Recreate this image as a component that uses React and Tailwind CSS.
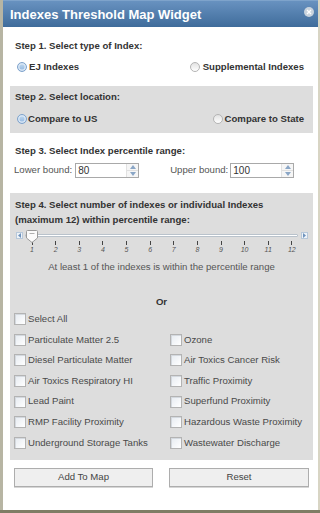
import React from 'react';

const font = "font-['Liberation_Sans',Arial,sans-serif]";

const Radio = ({ checked }) => (
  <span
    className={
      checked
        ? 'inline-block w-[10px] h-[10px] rounded-full border border-[#7fa3cc] bg-gradient-to-b from-[#c4dbf1] to-[#8fb5de] shadow-[inset_0_0_0_1.5px_#d9e7f5]'
        : 'inline-block w-[10px] h-[10px] rounded-full border border-[#b4b4b4] bg-gradient-to-b from-[#e2e2e2] to-white'
    }
  />
);

const Checkbox = () => (
  <span className="inline-block w-[12px] h-[12px] border border-[#b3b3b3] bg-gradient-to-br from-[#e6ebf1] to-white shadow-[inset_1px_1px_0_#d4d9df] shrink-0" />
);

const NumberInput = ({ value }) => (
  <div className="flex w-[64px] h-[15px] border border-[#a9a9a9] bg-white">
    <span className="flex-1 pl-[2px] text-[10px] leading-[13px] text-[#333]">{value}</span>
    <div className="w-[12px] flex flex-col border-l border-[#e2e2e2] bg-[#f6f6f6]">
      <div className="flex-1 flex items-center justify-center border-b border-[#e0e0e0]">
        <svg width="6" height="4" viewBox="0 0 6 4"><path d="M0 4 L3 0 L6 4 Z" fill="#8aa6c6" /></svg>
      </div>
      <div className="flex-1 flex items-center justify-center">
        <svg width="6" height="4" viewBox="0 0 6 4"><path d="M0 0 L3 4 L6 0 Z" fill="#8aa6c6" /></svg>
      </div>
    </div>
  </div>
);

const indexes = [
  ['Particulate Matter 2.5', 'Ozone'],
  ['Diesel Particulate Matter', 'Air Toxics Cancer Risk'],
  ['Air Toxics Respiratory HI', 'Traffic Proximity'],
  ['Lead Paint', 'Superfund Proximity'],
  ['RMP Facility Proximity', 'Hazardous Waste Proximity'],
  ['Underground Storage Tanks', 'Wastewater Discharge'],
];

const CheckItem = ({ label }) => (
  <div className="flex items-center gap-[2px] h-[20.6px]">
    <Checkbox />
    <span className="text-[9.6px] text-[#4a4a4a] whitespace-nowrap">{label}</span>
  </div>
);

export default function App() {
  return (
    <div className={`w-[320px] h-[513px] flex flex-col ${font}`}>
      <div className="flex h-[510px]">
        <div className="w-[3px] bg-[#b7b5a3]" />
        <div className="flex-1 flex flex-col bg-white">
          {/* Title bar */}
          <div className="h-[27px] flex items-center justify-between pl-[7px] pr-[4px] bg-gradient-to-b from-[#6892c0] to-[#3f6c9b] border-t border-[#7ea3cb]">
            <span className="text-[13px] font-bold text-white leading-none pt-[1px]">Indexes Threshold Map Widget</span>
            <span className="w-[10px] h-[10px] rounded-full bg-[#c9d3dd] flex items-center justify-center mb-[4px]">
              <svg width="6" height="6" viewBox="0 0 6 6"><path d="M1 1 L5 5 M5 1 L1 5" stroke="#fff" strokeWidth="1.3" /></svg>
            </span>
          </div>

          {/* Step 1 */}
          <div className="mt-[9px] h-[20px] flex items-center pl-[12px] text-[9.6px] font-bold text-[#333]">
            Step 1. Select type of Index:
          </div>
          <div className="mt-[2px] h-[19px] flex items-center justify-between pl-[14px] pr-[14px] text-[9.6px] font-bold text-[#333]">
            <label className="flex items-center gap-[2px]"><Radio checked />EJ Indexes</label>
            <label className="flex items-center gap-[3px]"><Radio />Supplemental Indexes</label>
          </div>

          {/* Step 2 */}
          <div className="mt-[9px] ml-[7px] mr-[5px] h-[47px] bg-[#dddddd] flex flex-col pt-[1px] text-[9.6px] font-bold text-[#333]">
            <div className="h-[20px] flex items-center pl-[5px]">Step 2. Select location:</div>
            <div className="mt-[2px] h-[20px] flex items-center justify-between pl-[7px] pr-[9px]">
              <label className="flex items-center gap-[1px]"><Radio checked />Compare to US</label>
              <label className="flex items-center gap-[2px]"><Radio />Compare to State</label>
            </div>
          </div>

          {/* Step 3 */}
          <div className="mt-[8px] h-[20px] flex items-center pl-[12px] text-[9.6px] font-bold text-[#333]">
            Step 3. Select Index percentile range:
          </div>
          <div className="mt-[2px] h-[15px] flex items-center pl-[11px] text-[9.6px] text-[#555]">
            <span className="mr-[3px]">Lower bound:</span>
            <NumberInput value="80" />
            <span className="ml-[31px] mr-[2px]">Upper bound:</span>
            <NumberInput value="100" />
          </div>

          {/* Step 4 */}
          <div className="mt-[15px] ml-[7px] mr-[5px] h-[267px] bg-[#dddddd] flex flex-col pt-[4px]">
            <div className="pl-[5px] text-[9.6px] font-bold text-[#333] leading-[15px]">
              Step 4. Select number of indexes or individual Indexes<br />
              (maximum 12) within percentile range:
            </div>

            {/* Slider */}
            <div className="mt-[2px] h-[12px] flex items-center pl-[6px] pr-[5px]">
              <span className="w-[7px] h-[7px] border border-[#b7c8da] bg-[#eef3f8] flex items-center justify-center">
                <svg width="3" height="5" viewBox="0 0 3 5"><path d="M3 0 L0 2.5 L3 5 Z" fill="#6f93bd" /></svg>
              </span>
              <div className="relative flex-1 ml-[2px] mr-[3px] h-[3px] border border-[#b9c2cb] bg-white rounded-[1px]">
                <svg className="absolute left-[0px] top-[-5px]" width="12" height="13" viewBox="0 0 12 13">
                  <path d="M0.5 1.5 Q0.5 0.5 1.5 0.5 L10.5 0.5 Q11.5 0.5 11.5 1.5 L11.5 8 L6 12.5 L0.5 8 Z" fill="#fbfbfb" stroke="#9a9a9a" />
                  <path d="M3.5 3.5 L8.5 3.5" stroke="#b0b0b0" />
                </svg>
              </div>
              <span className="w-[7px] h-[7px] border border-[#b7c8da] bg-[#eef3f8] flex items-center justify-center">
                <svg width="3" height="5" viewBox="0 0 3 5"><path d="M0 0 L3 2.5 L0 5 Z" fill="#6f93bd" /></svg>
              </span>
            </div>
            <div className="ml-[17px] w-[270px] flex justify-between">
              {Array.from({ length: 12 }, (_, i) => (
                <div key={i} className="w-[10px] flex flex-col items-center">
                  <span className="w-px h-[4px] bg-[#444]" />
                  <span className="text-[7px] italic leading-[9px] text-[#555]">{i + 1}</span>
                </div>
              ))}
            </div>

            <div className="mt-[4.5px] leading-[16px] text-center text-[9.6px] text-[#555]">
              At least 1 of the indexes is within the percentile range
            </div>
            <div className="mt-[20.5px] h-[14px] flex items-center justify-center text-[9.6px] font-bold text-[#333]">
              Or
            </div>

            <div className="pl-[4px] grid grid-cols-[156px_1fr]">
              <CheckItem label="Select All" />
              <div />
              {indexes.map(([a, b]) => (
                <React.Fragment key={a}>
                  <CheckItem label={a} />
                  <CheckItem label={b} />
                </React.Fragment>
              ))}
            </div>
          </div>

          {/* Buttons */}
          <div className="mt-[8px] flex pl-[11px] gap-[16px]">
            <button className="w-[139px] h-[19px] border border-[#adadad] bg-[#efefef] text-[9.6px] text-[#444] shadow-[0_1px_0_#d6d6d6]">
              Add To Map
            </button>
            <button className="w-[140px] h-[19px] border border-[#adadad] bg-[#efefef] text-[9.6px] text-[#444] shadow-[0_1px_0_#d6d6d6]">
              Reset
            </button>
          </div>
        </div>
        <div className="w-[2px] bg-[#d8d5c4]" />
      </div>
      <div className="h-[3px] bg-[#7f7d65]" />
    </div>
  );
}
